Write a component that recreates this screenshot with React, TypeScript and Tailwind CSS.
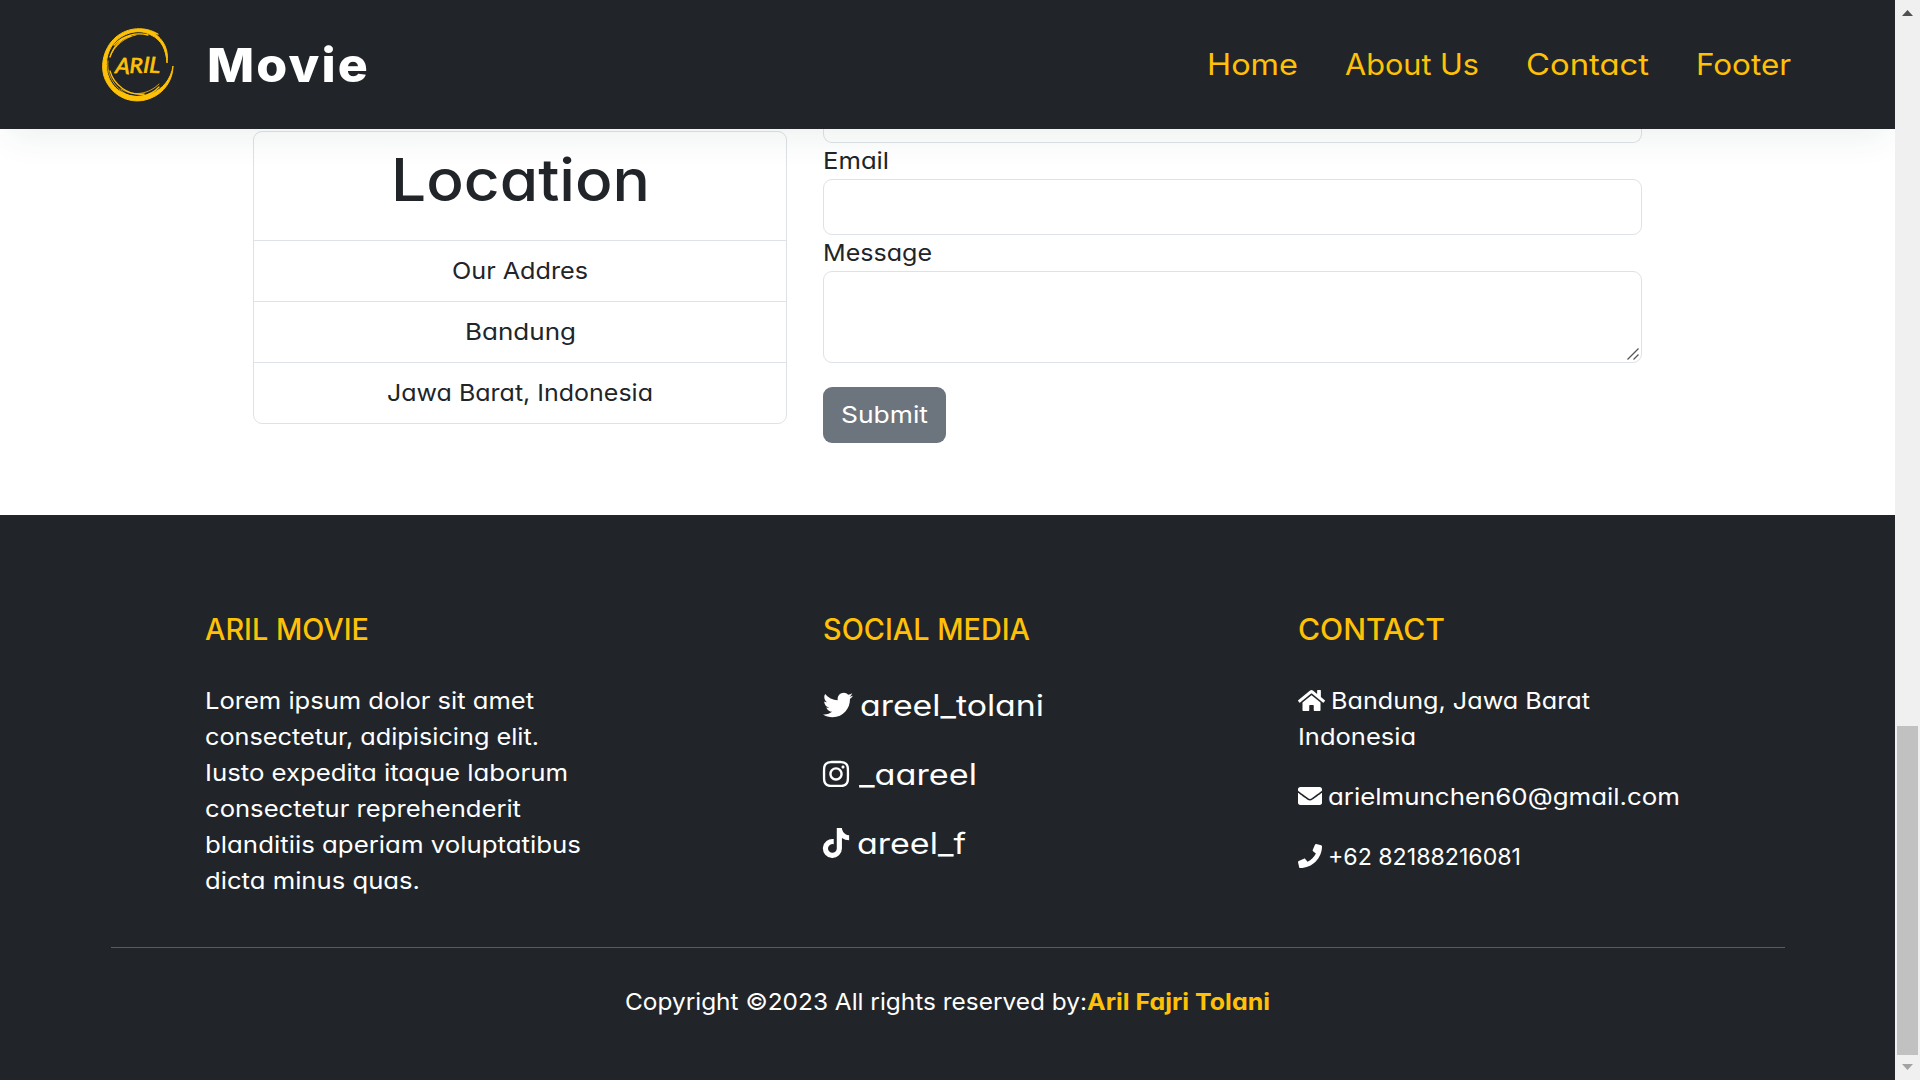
import { useLayoutEffect, useRef } from "react";
import type { ReactNode } from "react";
import { FaTwitter, FaInstagram, FaTiktok, FaHome, FaEnvelope, FaPhone } from "react-icons/fa";

/* One line of text whose glyphs are widened so that it spans `w` pixels. */
function Fit({ w, children, className = "" }: { w: number; children: string; className?: string }) {
  const ref = useRef<HTMLSpanElement>(null);
  useLayoutEffect(() => {
    const el = ref.current;
    if (!el) return;
    el.style.transform = "none";
    const natural = el.getBoundingClientRect().width;
    el.style.transform = `scaleX(${w / natural})`;
  }, [w, children]);
  return (
    <span className="inline-block text-left whitespace-pre" style={{ width: w }}>
      <span ref={ref} className={`inline-block origin-left ${className}`}>
        {children}
      </span>
    </span>
  );
}

function Logo() {
  return (
    <svg className="h-[76px] w-[74px]" viewBox="0 0 74 76" fill="none" stroke="#ffc107" strokeLinecap="round">
      <path d="M57 7 C44 -1 27 0 15 10 C1 22 -2 43 6 56 C15 72 34 78 50 71 C63 66 72 53 72 39 C70 52 62 62 50 67 C34 73 18 68 10 55 C3 43 4 27 13 16 C24 4 40 2 50 8 C61 13 65 23 66 36 C68 23 63 13 53 6 Z" fill="#ffc107" strokeWidth="1" />
      <path d="M13 18 C22 8 36 5 47 8 M9 30 C12 20 20 11 30 9 M9 44 C13 58 27 69 43 67 M18 64 C33 74 50 69 58 60" strokeWidth="1.3" />
      <path d="M7 34 C5 49 15 63 29 69 M20 62 C33 70 48 67 58 57 M9 30 C13 19 24 10 35 8" strokeWidth="0.8" />
      <g fill="#ffc107" stroke="#ffc107" strokeWidth="0.7" fontFamily="Lato, sans-serif" fontStyle="italic" fontWeight="400" fontSize="22">
        <text x="14" y="45.500" textLength="45" lengthAdjust="spacingAndGlyphs" dy="0.500 -0.500 0 0" rotate="5 0 3 3">ARIL</text>
      </g>
    </svg>
  );
}

const nav: [string, number][] = [["Home", 91], ["About Us", 134], ["Contact", 123], ["Footer", 95]];
const address: [string, number][] = [["Our Addres", 136], ["Bandung", 111], ["Jawa Barat, Indonesia", 266]];
const lorem: [string, number][] = [
  ["Lorem ipsum dolor sit amet", 329],
  ["consectetur, adipisicing elit.", 334],
  ["Iusto expedita itaque laborum", 363],
  ["consectetur reprehenderit", 316],
  ["blanditiis aperiam voluptatibus", 376],
  ["dicta minus quas.", 215],
];

function FooterHeading({ w, children }: { w: number; children: string }) {
  return (
    <h5 className="mb-[35px] h-9 text-[29.3px] leading-9 font-medium text-[#ffc107]">
      <Fit w={w}>{children}</Fit>
    </h5>
  );
}

function Social({ icon, gap, w, children }: { icon: ReactNode; gap: string; w: number; children: string }) {
  return (
    <li className={`flex h-[45px] items-center text-[29.3px] leading-[45px] ${gap}`}>
      {icon}
      <Fit w={w}>{children}</Fit>
    </li>
  );
}

function Scrollbar() {
  return (
    <div className="flex w-[25px] shrink-0 flex-col items-center bg-[#f0f0f0]">
      <svg className="h-[25px] w-[25px]" viewBox="0 0 25 25"><path d="M7 16h11l-5.500-6z" fill="#505050" /></svg>
      <div className="mt-[701px] h-[329px] w-[21px] bg-[#c1c1c1]" />
      <svg className="h-[25px] w-[25px]" viewBox="0 0 25 25"><path d="M7 9h11l-5.500 6z" fill="#a3a3a3" /></svg>
    </div>
  );
}

export default function App() {
  return (
    <div className="flex h-[1080px] w-[1920px] overflow-hidden bg-white font-[Inter,sans-serif] text-[23.5px] leading-9 text-[#212529] [font-feature-settings:'cv11']">
      <div className="flex w-[1895px] flex-col overflow-hidden">
        <header className="relative z-10 flex h-[129px] shrink-0 items-center bg-[#212529] pl-[101px] shadow-[0_16px_32px_-8px_rgba(30,60,50,0.08)]">
          <Logo />
          <span className="ml-[32px] text-[47px] leading-[70px] font-extrabold text-white">
            <Fit w={163} className="tracking-[2px]">Movie</Fit>
          </span>
          <nav className="mr-[104px] ml-auto flex gap-[47px] text-[29.3px] leading-[45px] text-[#ffc107]">
            {nav.map(([t, w]) => (
              <a key={t}><Fit w={w}>{t}</Fit></a>
            ))}
          </nav>
        </header>

        <main className="flex h-[386px] shrink-0 items-start bg-white pl-[253px]">
          <section className="mt-0.5 w-[534px] rounded-[9px] border border-[#dee2e6] text-center">
            <h1 className="h-[108px] pt-3 text-[58.5px] leading-[72px] font-medium">
              <Fit w={259}>Location</Fit>
            </h1>
            {address.map(([t, w]) => (
              <p key={t} className="h-[61px] border-t border-[#dee2e6] py-3"><Fit w={w}>{t}</Fit></p>
            ))}
          </section>
          <form className="ml-9 flex w-[819px] flex-col items-start">
            <div className="h-3.5 w-full rounded-b-[9px] border border-t-0 border-[#dee2e6]" />
            <label className="h-9"><Fit w={66}>Email</Fit></label>
            <input className="h-14 w-full rounded-[9px] border border-[#dee2e6]" />
            <label className="h-9"><Fit w={109}>Message</Fit></label>
            <textarea className="block h-[92px] w-full resize-none rounded-[9px] border border-[#dee2e6]" />
            <svg className="-mt-[15px] mr-[3px] h-3 w-3 self-end" viewBox="0 0 12 12" stroke="#555" strokeWidth="1.3"><path d="M.5 11.500l11-11M6.500 11.500l5-5" /></svg>
            <button type="button" className="mt-[27px] h-14 w-[123px] rounded-[9px] bg-[#6c757d] text-white"><Fit w={87}>Submit</Fit></button>
          </form>
        </main>

        <footer className="flex grow flex-col bg-[#212529] pt-[97px] text-white">
          <div className="flex h-[335px] items-start pl-[205px]">
            <section className="w-[618px]">
              <FooterHeading w={164}>ARIL MOVIE</FooterHeading>
              {lorem.map(([t, w]) => (
                <p key={t}><Fit w={w}>{t}</Fit></p>
              ))}
            </section>
            <section className="w-[475px]">
              <FooterHeading w={207}>SOCIAL MEDIA</FooterHeading>
              <ul className="flex flex-col gap-6">
                <Social icon={<FaTwitter className="-mt-0.5 size-[30px]" />} gap="gap-[7px]" w={184}>areel_tolani</Social>
                <Social icon={<FaInstagram className="-mt-0.5 -mr-[1px] -ml-[2px] size-[30px]" />} gap="gap-[9px]" w={118}>_aareel</Social>
                <Social icon={<FaTiktok className="-mt-0.5 -mr-[1px] -ml-[2px] size-[30px]" />} gap="gap-[7px]" w={109}>areel_f</Social>
              </ul>
            </section>
            <section>
              <FooterHeading w={147}>CONTACT</FooterHeading>
              <p className="flex items-center gap-[6px]"><FaHome className="-mt-0.5 size-[27px]" /><Fit w={259}>Bandung, Jawa Barat</Fit></p>
              <p><Fit w={118}>Indonesia</Fit></p>
              <p className="mt-6 flex items-center gap-1.5"><FaEnvelope className="-mt-0.5 size-6" /><Fit w={352}>arielmunchen60@gmail.com</Fit></p>
              <p className="mt-6 flex items-center gap-1.5"><FaPhone className="-mt-0.5 size-6" /><Fit w={193}>+62 82188216081</Fit></p>
            </section>
          </div>
          <hr className="mx-[111px] w-[1674px] border-[#595c5f]" />
          <p className="mt-9 flex justify-center">
            <Fit w={462}>{"Copyright ©2023 All rights reserved by:"}</Fit>
            <Fit w={183} className="font-bold text-[#ffc107]">Aril Fajri Tolani</Fit>
          </p>
        </footer>
      </div>
      <Scrollbar />
    </div>
  );
}
